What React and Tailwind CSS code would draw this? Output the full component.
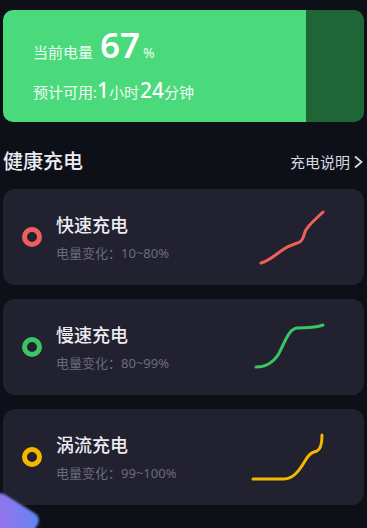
import React from "react";

const font = { fontFamily: '"Noto Sans", "Noto Sans CJK SC", sans-serif' };

const modes = [
  {
    name: "快速充电",
    range: "10~80%",
    ring: "border-[#f0605a]",
    stroke: "#f0605a",
    d: "M10 56 C 20 53, 26 46, 33 42 C 40 37, 47 37, 50 34 C 54 30, 52 25, 57 20 C 62 14, 67 10, 72 5",
  },
  {
    name: "慢速充电",
    range: "80~99%",
    ring: "border-[#3cc463]",
    stroke: "#3cc463",
    d: "M5 50 C 14 50, 21 47, 27 38 C 33 28, 37 12, 46 11 C 54 10, 60 12, 72 8",
  },
  {
    name: "涡流充电",
    range: "99~100%",
    ring: "border-[#f5b800]",
    stroke: "#f5b800",
    d: "M2 52 L 33 52 C 42 52, 48 44, 54 34 C 58 27, 61 25, 66 24 C 70 22, 71 16, 71 8",
  },
];

const ModeCard = ({ mode }) => {
  return (
    <div className="h-[96px] rounded-[12px] bg-[#22212f] flex items-center pl-[19px]">
      <div className={"w-[20px] h-[20px] rounded-full border-[5px] " + mode.ring} />
      <div className="ml-[14px] flex flex-col">
        <p className="text-[18px] leading-[24px] font-medium text-[#ececf2]">{mode.name}</p>
        <p className="mt-[7px] text-[13px] leading-[18px] text-[#6c6b7b]">
          电量变化：{mode.range}
        </p>
      </div>
      <svg
        width="76"
        height="60"
        viewBox="0 0 76 60"
        fill="none"
        className="ml-auto mr-[37px]"
      >
        <path d={mode.d} stroke={mode.stroke} strokeWidth="3" strokeLinecap="round" />
      </svg>
    </div>
  );
};

export default function App() {
  return (
    <div
      className="relative w-[367px] h-[528px] overflow-hidden bg-[#0e1018] px-[3px] pt-[10px]"
      style={font}
    >
      {/* battery */}
      <div className="h-[112px] rounded-[10px] overflow-hidden flex">
        <div className="flex-1 bg-[#4ad97b] pl-[30px] pt-[17px] text-white">
          <div className="flex items-baseline h-[36px]">
            <span className="text-[15px] text-white/90">当前电量</span>
            <span className="ml-[7px] text-[35px] leading-none font-semibold">67</span>
            <span className="ml-[3px] text-[14px] text-white/90">%</span>
          </div>
          <div className="mt-[17px] flex items-baseline">
            <span className="text-[15px] text-white/90">预计可用:</span>
            <span className="text-[21px] leading-none font-medium">1</span>
            <span className="text-[15px] text-white/90">小时</span>
            <span className="ml-[1px] text-[21px] leading-none font-medium">24</span>
            <span className="text-[15px] text-white/90">分钟</span>
          </div>
        </div>
        <div className="w-[58px] bg-[#1f6636]" />
      </div>

      {/* heading */}
      <div className="mt-[26px] mb-[13px] h-[28px] flex items-center justify-between">
        <h2 className="text-[20px] font-medium text-[#ececf2]">健康充电</h2>
        <div className="flex items-center text-[15px] text-[#d8d8e0]">
          <span>充电说明</span>
          <svg width="11" height="14" viewBox="0 0 11 14" fill="none" className="ml-[3px]">
            <path d="M2 1.5 L8.5 7 L2 12.5" stroke="#d8d8e0" strokeWidth="1.8" />
          </svg>
        </div>
      </div>

      <div className="flex flex-col gap-[14px]">
        {modes.map((m) => (
          <ModeCard key={m.name} mode={m} />
        ))}
      </div>

      {/* floating corner */}
      <div className="absolute left-[-20px] bottom-[-24px] w-[52px] h-[52px] rotate-[32deg] rounded-[8px] bg-gradient-to-tr from-[#b460e8] to-[#5a86f2] blur-[1px]" />
    </div>
  );
}
